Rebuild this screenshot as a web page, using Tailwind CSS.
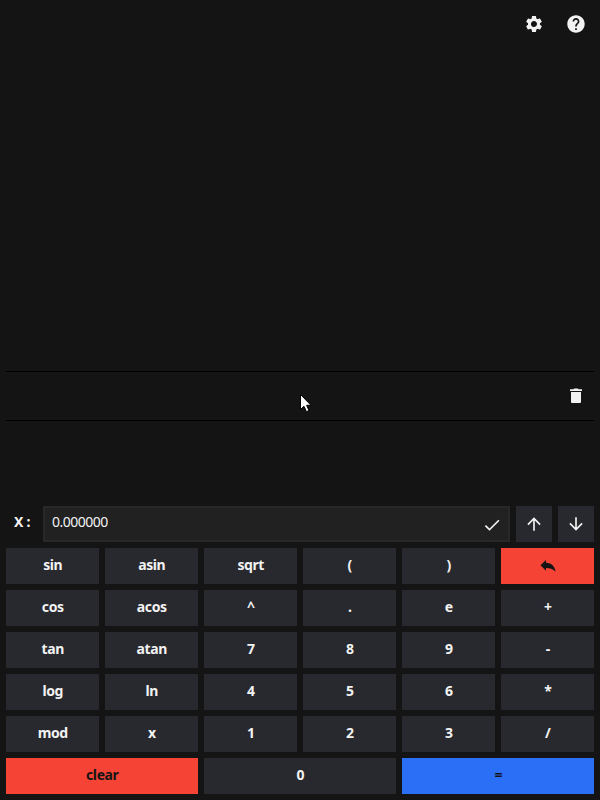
<!DOCTYPE html>
<html lang="en">
<head>
<meta charset="utf-8">
<title>Calculator</title>
<script src="https://cdn.jsdelivr.net/npm/@tailwindcss/browser@4"></script>
</head>
<body class="relative flex h-[800px] w-[600px] flex-col overflow-hidden bg-[#141414] px-1.5 pb-1.5 font-['Noto_Sans',sans-serif] text-[14px] text-[#f2f2f2]">
  <header class="flex h-[371px] shrink-0 items-start justify-end gap-1.5 pt-1.5">
    <button class="flex size-9 items-center justify-center" aria-label="Settings">
      <svg class="size-5" viewBox="0 0 24 24" fill="currentColor"><path d="M19.14 12.94c.04-.3.06-.61.06-.94 0-.32-.02-.64-.07-.94l2.03-1.58c.18-.14.23-.41.12-.61l-1.92-3.32c-.12-.22-.37-.29-.59-.22l-2.39.96c-.5-.38-1.03-.7-1.62-.94l-.36-2.54c-.04-.24-.24-.41-.48-.41h-3.84c-.24 0-.43.17-.47.41l-.36 2.54c-.59.24-1.13.57-1.62.94l-2.39-.96c-.22-.08-.47 0-.59.22L2.74 8.87c-.12.21-.08.47.12.61l2.03 1.58c-.05.3-.09.63-.09.94s.02.64.07.94l-2.03 1.58c-.18.14-.23.41-.12.61l1.92 3.32c.12.22.37.29.59.22l2.39-.96c.5.38 1.03.7 1.62.94l.36 2.54c.05.24.24.41.48.41h3.84c.24 0 .44-.17.47-.41l.36-2.54c.59-.24 1.13-.56 1.62-.94l2.39.96c.22.08.47 0 .59-.22l1.92-3.32c.12-.22.07-.47-.12-.61l-2.01-1.58zM12 15.6A3.61 3.61 0 0 1 8.4 12c0-1.98 1.62-3.6 3.6-3.6s3.6 1.62 3.6 3.6-1.62 3.6-3.6 3.6z"/></svg>
    </button>
    <button class="flex size-9 items-center justify-center" aria-label="Help">
      <svg class="size-5" viewBox="0.5 0.5 23 23" fill="currentColor"><path d="M12 2C6.48 2 2 6.48 2 12s4.480 10 10 10 10-4.480 10-10S17.520 2 12 2zm1 17h-2v-2h2v2zm2.070-7.750l-.9.920C13.450 12.900 13 13.500 13 15h-2v-.5c0-1.100.45-2.100 1.170-2.830l1.240-1.260c.37-.36.59-.86.59-1.410 0-1.100-.9-2-2-2s-2 .9-2 2H8c0-2.210 1.790-4 4-4s4 1.790 4 4c0 .88-.36 1.680-.93 2.250z"/></svg>
    </button>
  </header>

  <section class="flex h-[50px] shrink-0 items-center justify-end border-y border-black">
    <button class="flex size-9 items-center justify-center" aria-label="Delete history">
      <svg class="size-5" viewBox="0 0 20 20" fill="currentColor"><path d="M5 6h10v10q0 1-1 1H6q-1 0-1-1zM4 3.300h3.500L8 2.600h4l.5.700H16V5H4z"/></svg>
    </button>
  </section>

  <section class="mt-[85px] flex h-9 shrink-0 gap-1.5">
    <div class="w-[31px] pl-2 pt-1.5 font-bold leading-5 whitespace-nowrap tracking-[-0.3px]">X :</div>
    <div class="flex w-[467px] items-center justify-between border-2 border-[#28282a] bg-[#212122] pl-[7px] pr-1.5">
      <span class="-mt-[5px] tracking-[-0.5px]">0.000000</span>
      <svg class="mt-0.5 size-5" viewBox="0 0 24 24" fill="currentColor"><path d="M9 16.170L4.830 12l-1.420 1.410L9 19 21 7l-1.410-1.410z"/></svg>
    </div>
    <button class="flex size-9 items-center justify-center bg-[#28292e]" aria-label="Previous">
      <svg class="size-5" viewBox="0 0 24 24" fill="currentColor"><path d="M4 12l1.410 1.410L11 7.830V20h2V7.830l5.580 5.590L20 12l-8-8-8 8z"/></svg>
    </button>
    <button class="flex size-9 items-center justify-center bg-[#28292e]" aria-label="Next">
      <svg class="size-5" viewBox="0 0 24 24" fill="currentColor"><path d="M20 12l-1.410-1.410L13 16.170V4h-2v12.170l-5.580-5.590L4 12l8 8 8-8z"/></svg>
    </button>
  </section>

  <main class="mt-1.5 grid grid-cols-6 auto-rows-[36px] gap-1.5 font-bold leading-5 tracking-[-0.4px] [&>button]:bg-[#28292e] [&>button]:pb-[3px] [&>button]:pl-[0.5px]">
    <button>sin</button><button>asin</button><button>sqrt</button><button>(</button><button>)</button>
    <button class="flex items-center justify-center bg-[#f54336]! pb-0! text-[#141414]" aria-label="Backspace">
      <svg class="h-3 w-4" viewBox="0 0 16 12" fill="currentColor"><path d="M0.500 5.200L6 0v2.700C11.500 2.800 14.800 6 15.500 11.800C13 8.900 10 8 6 8v2.800z"/></svg>
    </button>
    <button>cos</button><button>acos</button><button>^</button><button>.</button><button>e</button><button>+</button>
    <button>tan</button><button>atan</button><button>7</button><button>8</button><button>9</button><button>-</button>
    <button>log</button><button>ln</button><button>4</button><button>5</button><button>6</button><button>*</button>
    <button>mod</button><button>x</button><button>1</button><button>2</button><button>3</button><button>/</button>
    <button class="col-span-2 bg-[#f54336]! text-[#141414]">clear</button>
    <button class="col-span-2">0</button>
    <button class="col-span-2 bg-[#2a6ff6]! text-[#141414]">=</button>
  </main>

  <svg class="pointer-events-none absolute left-[299px] top-[392px] h-[22px] w-[14px]" viewBox="0 0 14 22"><path d="M1.500 2.500V17.500L5 14.300L7.400 19.700L10 18.500L7.600 13.300H12z" fill="#fff" stroke="#000" stroke-width="1"/></svg>
</body>
</html>
